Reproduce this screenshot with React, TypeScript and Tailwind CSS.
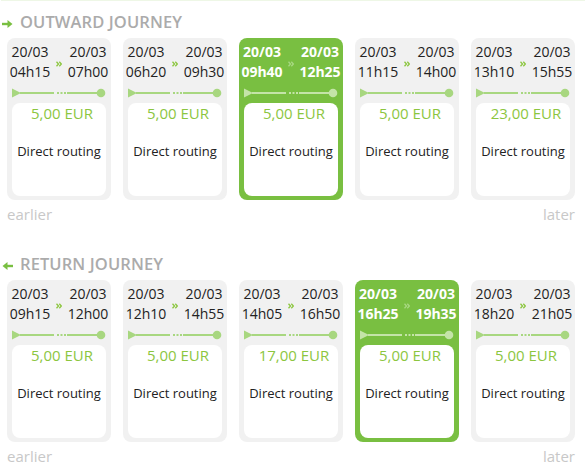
import React from "react";

type Trip = { d1: string; t1: string; d2: string; t2: string; price: string; selected?: boolean };

const outward: Trip[] = [
  { d1: "20/03", t1: "04h15", d2: "20/03", t2: "07h00", price: "5,00 EUR" },
  { d1: "20/03", t1: "06h20", d2: "20/03", t2: "09h30", price: "5,00 EUR" },
  { d1: "20/03", t1: "09h40", d2: "20/03", t2: "12h25", price: "5,00 EUR", selected: true },
  { d1: "20/03", t1: "11h15", d2: "20/03", t2: "14h00", price: "5,00 EUR" },
  { d1: "20/03", t1: "13h10", d2: "20/03", t2: "15h55", price: "23,00 EUR" },
];

const ret: Trip[] = [
  { d1: "20/03", t1: "09h15", d2: "20/03", t2: "12h00", price: "5,00 EUR" },
  { d1: "20/03", t1: "12h10", d2: "20/03", t2: "14h55", price: "5,00 EUR" },
  { d1: "20/03", t1: "14h05", d2: "20/03", t2: "16h50", price: "17,00 EUR" },
  { d1: "20/03", t1: "16h25", d2: "20/03", t2: "19h35", price: "5,00 EUR", selected: true },
  { d1: "20/03", t1: "18h20", d2: "20/03", t2: "21h05", price: "5,00 EUR" },
];

function Timeline({ color }: { color: string }) {
  return (
    <svg width="94" height="10" viewBox="0 0 94 10" className="block">
      <polygon points="0,0.5 9,5 0,9.5" fill={color} />
      <rect x="8" y="4" width="34" height="2" fill={color} />
      <rect x="45" y="4" width="2" height="2" fill={color} />
      <rect x="48.5" y="4" width="2" height="2" fill={color} />
      <rect x="52" y="4" width="2" height="2" fill={color} />
      <rect x="55" y="4" width="32" height="2" fill={color} />
      <circle cx="89" cy="5" r="4.3" fill={color} />
    </svg>
  );
}

function Chevrons({ color }: { color: string }) {
  return (
    <svg width="6" height="6" viewBox="0 0 6 6" className="block mt-[3px]">
      <polyline points="0.5,0.8 2.5,3 0.5,5.2" fill="none" stroke={color} strokeWidth="1.3" />
      <polyline points="3.3,0.8 5.3,3 3.3,5.2" fill="none" stroke={color} strokeWidth="1.3" />
    </svg>
  );
}

function Card({ t }: { t: Trip }) {
  const sel = !!t.selected;
  return (
    <div
      className={
        "w-[104px] h-[162px] rounded-[8px] flex flex-col px-[5px] pt-[4px] pb-[4px] " +
        (sel ? "bg-[#79bf41]" : "bg-[#f1f1f1]")
      }
    >
      <div
        className={
          "flex items-center justify-between text-[14px] leading-[20px] " +
          (sel ? "text-white font-bold" : "text-[#222] font-normal")
        }
      >
        <div className="flex flex-col items-center w-[40px] -ml-[2px]">
          <span>{t.d1}</span>
          <span>{t.t1}</span>
        </div>
        <Chevrons color={sel ? "#a9d884" : "#8cc63f"} />
        <div className="flex flex-col items-center w-[40px] mr-[-2px]">
          <span>{t.d2}</span>
          <span>{t.t2}</span>
        </div>
      </div>
      <div className="mt-[6px] h-[10px]">
        <Timeline color={sel ? "#c4e4a8" : "#a8d780"} />
      </div>
      <div className="mt-[5px] flex-1 bg-white rounded-[8px] flex flex-col items-center">
        <div className="pl-[6px] text-[15px] leading-[20px] text-[#8cc63f]">{t.price}</div>
        <div className="mt-[18px] text-[13px] leading-[20px] text-[#222] whitespace-nowrap">Direct routing</div>
      </div>
    </div>
  );
}

function Arrow({ dir }: { dir: "right" | "left" }) {
  return (
    <svg width="11" height="8" viewBox="0 0 11 8" className="block">
      {dir === "right" ? (
        <>
          <rect x="0" y="2.8" width="6" height="2.4" fill="#79bf41" />
          <polygon points="5.5,0 10.5,4 5.5,8" fill="#79bf41" />
        </>
      ) : (
        <>
          <rect x="5" y="2.8" width="6" height="2.4" fill="#79bf41" />
          <polygon points="5.5,0 0.5,4 5.5,8" fill="#79bf41" />
        </>
      )}
    </svg>
  );
}

function Section({ title, dir, trips }: { title: string; dir: "right" | "left"; trips: Trip[] }) {
  return (
    <div className="flex flex-col">
      <div className="flex items-center h-[20px]">
        <div className="w-[20px] pl-[2px] pt-[3px]">
          <Arrow dir={dir} />
        </div>
        <span className="text-[16.5px] leading-[20px] font-semibold text-[#ababab] tracking-[0.1px]">{title}</span>
      </div>
      <div className="mt-[6px] flex gap-[12px] pl-[7px]">
        {trips.map((t, i) => (
          <Card key={i} t={t} />
        ))}
      </div>
      <div className="mt-[4px] h-[20px] flex justify-between pl-[7px] pr-[11px] text-[15px] leading-[20px] text-[#c8c8c8]">
        <span>earlier</span>
        <span>later</span>
      </div>
    </div>
  );
}

export default function App() {
  return (
    <div
      className="w-[586px] h-[472px] bg-white overflow-hidden"
      style={{ fontFamily: '"Open Sans", "Liberation Sans", sans-serif' }}
    >
      <div className="mx-[1px] h-[1px] bg-[#eef7e6]" />
      <div className="pt-[11px] flex flex-col gap-[30px]">
        <Section title="OUTWARD JOURNEY" dir="right" trips={outward} />
        <Section title="RETURN JOURNEY" dir="left" trips={ret} />
      </div>
    </div>
  );
}
